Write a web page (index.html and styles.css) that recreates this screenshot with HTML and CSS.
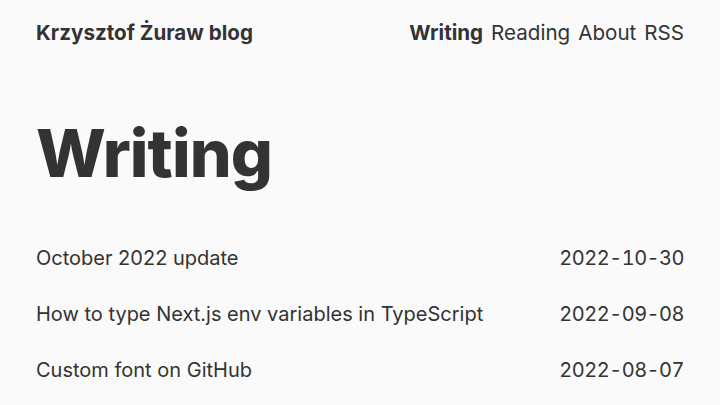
FILE: index.html
```html
<!DOCTYPE html>
<html lang="en">
<head>
<meta charset="utf-8">
<title>Writing | Krzysztof Żuraw blog</title>
<link rel="stylesheet" href="styles.css">
</head>
<body>
<div class="page">
  <header class="header">
    <a class="brand" href="#">Krzysztof Żuraw blog</a>
    <nav class="nav">
      <a class="nav-link active" href="#">Writing</a>
      <a class="nav-link" href="#">Reading</a>
      <a class="nav-link" href="#">About</a>
      <a class="nav-link" href="#">RSS</a>
    </nav>
  </header>
  <main class="main">
    <h1 class="title">Writing</h1>
    <ul class="posts">
      <li class="post"><a href="#">October 2022 update</a><span class="date">2022-10-30</span></li>
      <li class="post"><a href="#">How to type Next.js env variables in TypeScript</a><span class="date">2022-09-08</span></li>
      <li class="post"><a href="#">Custom font on GitHub</a><span class="date">2022-08-07</span></li>
    </ul>
  </main>
</div>
</body>
</html>
```
FILE: styles.css
```css
* { box-sizing: border-box; }
html, body { margin: 0; padding: 0; }
body {
  background: #fafafa;
  color: #333333;
  font-family: Inter, "Noto Sans", sans-serif;
  font-size: 20px;
}
a { color: inherit; text-decoration: none; }
.page { padding: 0 36px; }
.header {
  display: flex;
  justify-content: space-between;
  align-items: center;
  height: 64px;
  font-size: 20.6px;
}
.brand { font-weight: 700; }
.nav { display: flex; gap: 8px; }
.nav-link.active { font-weight: 700; }
.title {
  margin: 56px 0 44px;
  font-size: 66px;
  font-weight: 800;
  letter-spacing: -0.9px;
  line-height: 1;
}
.posts { list-style: none; margin: 0; padding: 0; }
.post {
  display: flex;
  justify-content: space-between;
  height: 56px;
  align-items: center;
}
.date { font-variant-numeric: tabular-nums; letter-spacing: -0.5px; }
```
